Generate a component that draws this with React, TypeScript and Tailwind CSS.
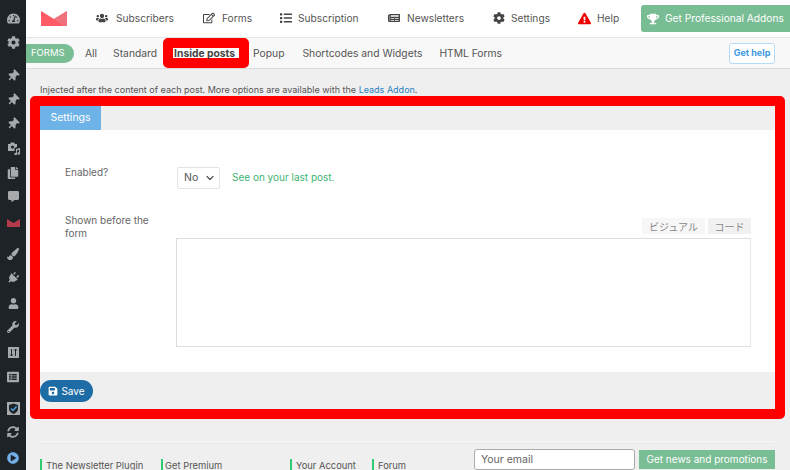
import { FaUsers, FaRegEdit, FaList, FaNewspaper, FaCog, FaExclamationTriangle, FaTrophy, FaSave, FaTachometerAlt, FaThumbtack, FaCopy, FaCommentAlt, FaPaintBrush, FaPlug, FaUser, FaWrench, FaListAlt, FaSyncAlt, FaPlayCircle } from "react-icons/fa";
import { ChevronDown } from "lucide-react";

const font = { fontFamily: "Inter, 'Noto Sans CJK JP', sans-serif" };

const navItems = [
    { label: "Subscribers", Icon: FaUsers, w: "w-[107px]", gap: "gap-[8px]" },
    { label: "Forms", Icon: FaRegEdit, w: "w-[77px]", gap: "gap-[7px]" },
    { label: "Subscription", Icon: FaList, w: "w-[108px]", gap: "gap-[6px]" },
    { label: "Newsletters", Icon: FaNewspaper, w: "w-[105px]", gap: "gap-[7px]" },
    { label: "Settings", Icon: FaCog, w: "w-[85px]", gap: "gap-[6px]" },
];

const Sidebar = () => (
    <div className="w-[26px] shrink-0 bg-[#1d2327] text-[#a7aaad] flex flex-col items-center pt-[12px] [&>*]:shrink-0">
        <FaTachometerAlt className="w-[13px] h-[13px] mb-[11px]" />
        <FaCog className="w-[13px] h-[13px] mb-[21px]" />
        <FaThumbtack className="w-[12px] h-[12px] mb-[12px] rotate-45" />
        <FaThumbtack className="w-[12px] h-[12px] mb-[12px] rotate-45" />
        <FaThumbtack className="w-[12px] h-[12px] mb-[12px] rotate-45" />
        {/* media: camera + note */}
        <svg viewBox="0 0 13 13" className="w-[13px] h-[13px] mb-[12px]" fill="currentColor">
            <path d="M1 2 H3 L4 0.5 H7 L8 2 H10 V5 L7.5 6 V9 H1 Z" />
            <circle cx="5.5" cy="5" r="1.6" fill="#1d2327" />
            <path d="M9 7 L13 6 V11.5 A1.3 1.3 0 1 1 12 10.3 V7.8 L10 8.3 V12 A1.3 1.3 0 1 1 9 10.8 Z" />
        </svg>
        <FaCopy className="w-[12px] h-[12px] mb-[12px]" />
        <FaCommentAlt className="w-[11px] h-[11px] mb-[17px]" />
        <svg viewBox="0 0 13 8" className="w-[13px] h-[8px] mb-[21px]">
            <path d="M0 0 L6.5 4 L13 0 V8 H0 Z" fill="#b33a4a" />
        </svg>
        <FaPaintBrush className="w-[12px] h-[12px] mb-[12px]" />
        <FaPlug className="w-[12px] h-[12px] mb-[14px] rotate-45" />
        <FaUser className="w-[11px] h-[11px] mb-[12px]" />
        <FaWrench className="w-[12px] h-[12px] mb-[14px]" />
        <svg viewBox="0 0 11 11" className="w-[11px] h-[11px] mb-[13px]">
            <rect width="11" height="11" fill="#a7aaad" />
            <path d="M3.5 2 V9 M2 7.5 L3.5 9 L5 7.5 M7.5 9 V2 M6 3.5 L7.5 2 L9 3.5" stroke="#1d2327" strokeWidth="1" fill="none" />
        </svg>
        <FaListAlt className="w-[12px] h-[12px] mb-[19px]" />
        <svg viewBox="0 0 13 13" className="w-[13px] h-[13px] mb-[11px]">
            <rect width="13" height="13" fill="#a7aaad" />
            <path d="M6.5 1.5 L11 3 V7 C11 9.5 8.5 11 6.5 12 C4.5 11 2 9.5 2 7 V3 Z" fill="#1d2327" />
            <path d="M4 6.5 L6 8.5 L9.5 4.5" stroke="#4a9fe0" strokeWidth="1.5" fill="none" />
        </svg>
        <FaSyncAlt className="w-[12px] h-[12px] mb-[14px]" />
        <FaPlayCircle className="w-[12px] h-[12px] text-[#72aee6]" />
    </div>
);

const Header = () => (
    <div className="h-[38px] shrink-0 bg-white border-b border-[#e4e4e4] flex items-center text-[10.2px] text-[#555]">
        <div className="w-[70px] pl-[15px] shrink-0">
            <svg viewBox="0 0 26 15" className="w-[26px] h-[15px]">
                <path d="M0 0 L13 8 L26 0 V15 H0 Z" fill="#ff5a66" />
                <path d="M13 8 L26 0 V15 H22 Z" fill="#f0727c" />
            </svg>
        </div>
        {navItems.map(({ label, Icon, w, gap }) => (
            <div key={label} className={`flex items-center shrink-0 ${gap} ${w}`}>
                <Icon className="w-[12px] h-[12px] text-[#444]" />
                <span>{label}</span>
            </div>
        ))}
        <div className="flex items-center gap-[6px] w-[63px] shrink-0">
            <FaExclamationTriangle className="w-[13px] h-[13px] text-[#f00000]" />
            <span>Help</span>
        </div>
        <div className="h-[27px] w-[160px] shrink-0 bg-[#79bd94] rounded-[3px] text-white flex items-center pl-[6px] gap-[6px] whitespace-nowrap">
            <FaTrophy className="w-[12px] h-[12px]" />
            <span>Get Professional Addons</span>
        </div>
    </div>
);

const Subnav = () => (
    <div className="h-[31px] shrink-0 bg-[#f8f8f8] border-b border-[#dcdcdc] flex items-center text-[10.3px] text-[#555] relative pr-[15px]">
        <span className="w-[48px] h-[19px] rounded-r-full bg-[#79bd94] text-white text-[9.5px] flex items-center pl-[5px] shrink-0">FORMS</span>
        <span className="ml-[11px] mt-[1px]">All</span>
        <span className="ml-[16px] mt-[1px]">Standard</span>
        <span className="ml-[17px] mt-[1px] relative z-10 font-bold text-[#444] whitespace-nowrap">Inside posts</span>
        <span className="ml-[18px] mt-[1px]">Popup</span>
        <span className="ml-[18px] mt-[1px]">Shortcodes and Widgets</span>
        <span className="ml-[17px] mt-[1px]">HTML Forms</span>
        <button className="ml-auto w-[46px] h-[21px] border border-[#b5dcf7] rounded-[3px] bg-white text-[#3d9ae0] text-[9px] font-bold">Get help</button>
        <div className="absolute left-[137px] top-0 w-[86px] h-[30px] border-[10px] border-[#ff0000] rounded-[5px] bg-white" />
    </div>
);

const Form = () => (
    <div className="mt-[1px] ml-[4px] mr-[5px] shrink-0 border-[10px] border-[#ff0000] rounded-[5px] bg-[#efefef]">
        <div className="h-[24px] flex">
            <span className="w-[61px] bg-[#6db3e8] text-white text-[10.5px] flex items-center justify-center">Settings</span>
        </div>
        <div className="h-[242px] bg-white pt-[37px] text-[10px] text-[#666]">
            <div className="flex h-[22px]">
                <span className="w-[137px] pl-[25px] leading-[10px]">Enabled?</span>
                <div className="w-[43px] h-[22px] bg-white border border-[#e4e4e4] rounded-[2px] flex items-center justify-between pl-[6px] pr-[3px] text-[10.5px] text-[#555]">
                    No
                    <ChevronDown className="w-[12px] h-[12px]" strokeWidth={2.5} />
                </div>
                <span className="ml-[12px] leading-[21px] text-[#3cb371]">See on your last post.</span>
            </div>
            <div className="flex mt-[29px]">
                <span className="w-[136px] -mt-[4px] pl-[25px] pr-[20px] leading-[13px]">Shown before the form</span>
                <div className="w-[575px]">
                    <div className="flex justify-end gap-[3px] h-[16px] text-[10px] text-[#888]">
                        <span className="w-[63px] pt-[3px] bg-[#f7f7f7] flex items-center justify-center">ビジュアル</span>
                        <span className="w-[43px] pt-[3px] bg-[#f1f1f1] flex items-center justify-center">コード</span>
                    </div>
                    <div className="h-[109px] mt-[4px] border border-[#dedede] border-r-[#e8e8e8] bg-white" />
                </div>
            </div>
        </div>
        <div className="h-[37px] pt-[1px] flex items-center">
            <button className="w-[53px] h-[22px] rounded-full bg-[#1e6ca6] text-white text-[10px] flex items-center justify-center gap-[3px]">
                <FaSave className="w-[10px] h-[10px]" />
                Save
            </button>
        </div>
    </div>
);

const Footer = () => (
    <div className="ml-[14px] mr-[15px] mt-[22px] shrink-0 border-t border-[#f8f8f8] flex text-[9.4px] text-[#555]">
        <span className="w-[121px] mt-[17px] h-[13px] border-l-2 border-[#2ecc71] pl-[4px] leading-[13px]">The Newsletter Plugin</span>
        <span className="w-[129px] mt-[17px] h-[13px] border-l-2 border-[#2ecc71] pl-[2px] leading-[13px]">Get Premium</span>
        <span className="w-[82px] mt-[17px] h-[13px] border-l-2 border-[#2ecc71] pl-[4px] leading-[13px]">Your Account</span>
        <span className="w-[102px] mt-[17px] h-[13px] border-l-2 border-[#2ecc71] pl-[4px] leading-[13px]">Forum</span>
        <div className="mt-[7px] w-[161px] h-[21px] shrink-0 bg-white border border-[#aaa] rounded-[3px] pl-[6px] text-[10.5px] text-[#666] leading-[19px]">Your email</div>
        <div className="mt-[8px] ml-[4px] w-[136px] h-[19px] shrink-0 bg-[#79bd94] text-white text-[10px] flex items-center justify-center whitespace-nowrap">Get news and promotions</div>
    </div>
);

export default function App() {
    return (
        <div className="w-[790px] h-[470px] overflow-hidden flex bg-[#efefef]" style={font}>
            <Sidebar />
            <div className="flex-1 min-w-0 flex flex-col">
                <Header />
                <Subnav />
                <p className="mt-[15px] ml-[14px] shrink-0 text-[9px] leading-[11px] text-[#555]">
                    Injected after the content of each post. More options are available with the <span className="text-[#2a7fc0]">Leads Addon</span>.
                </p>
                <Form />
                <Footer />
            </div>
        </div>
    );
}
